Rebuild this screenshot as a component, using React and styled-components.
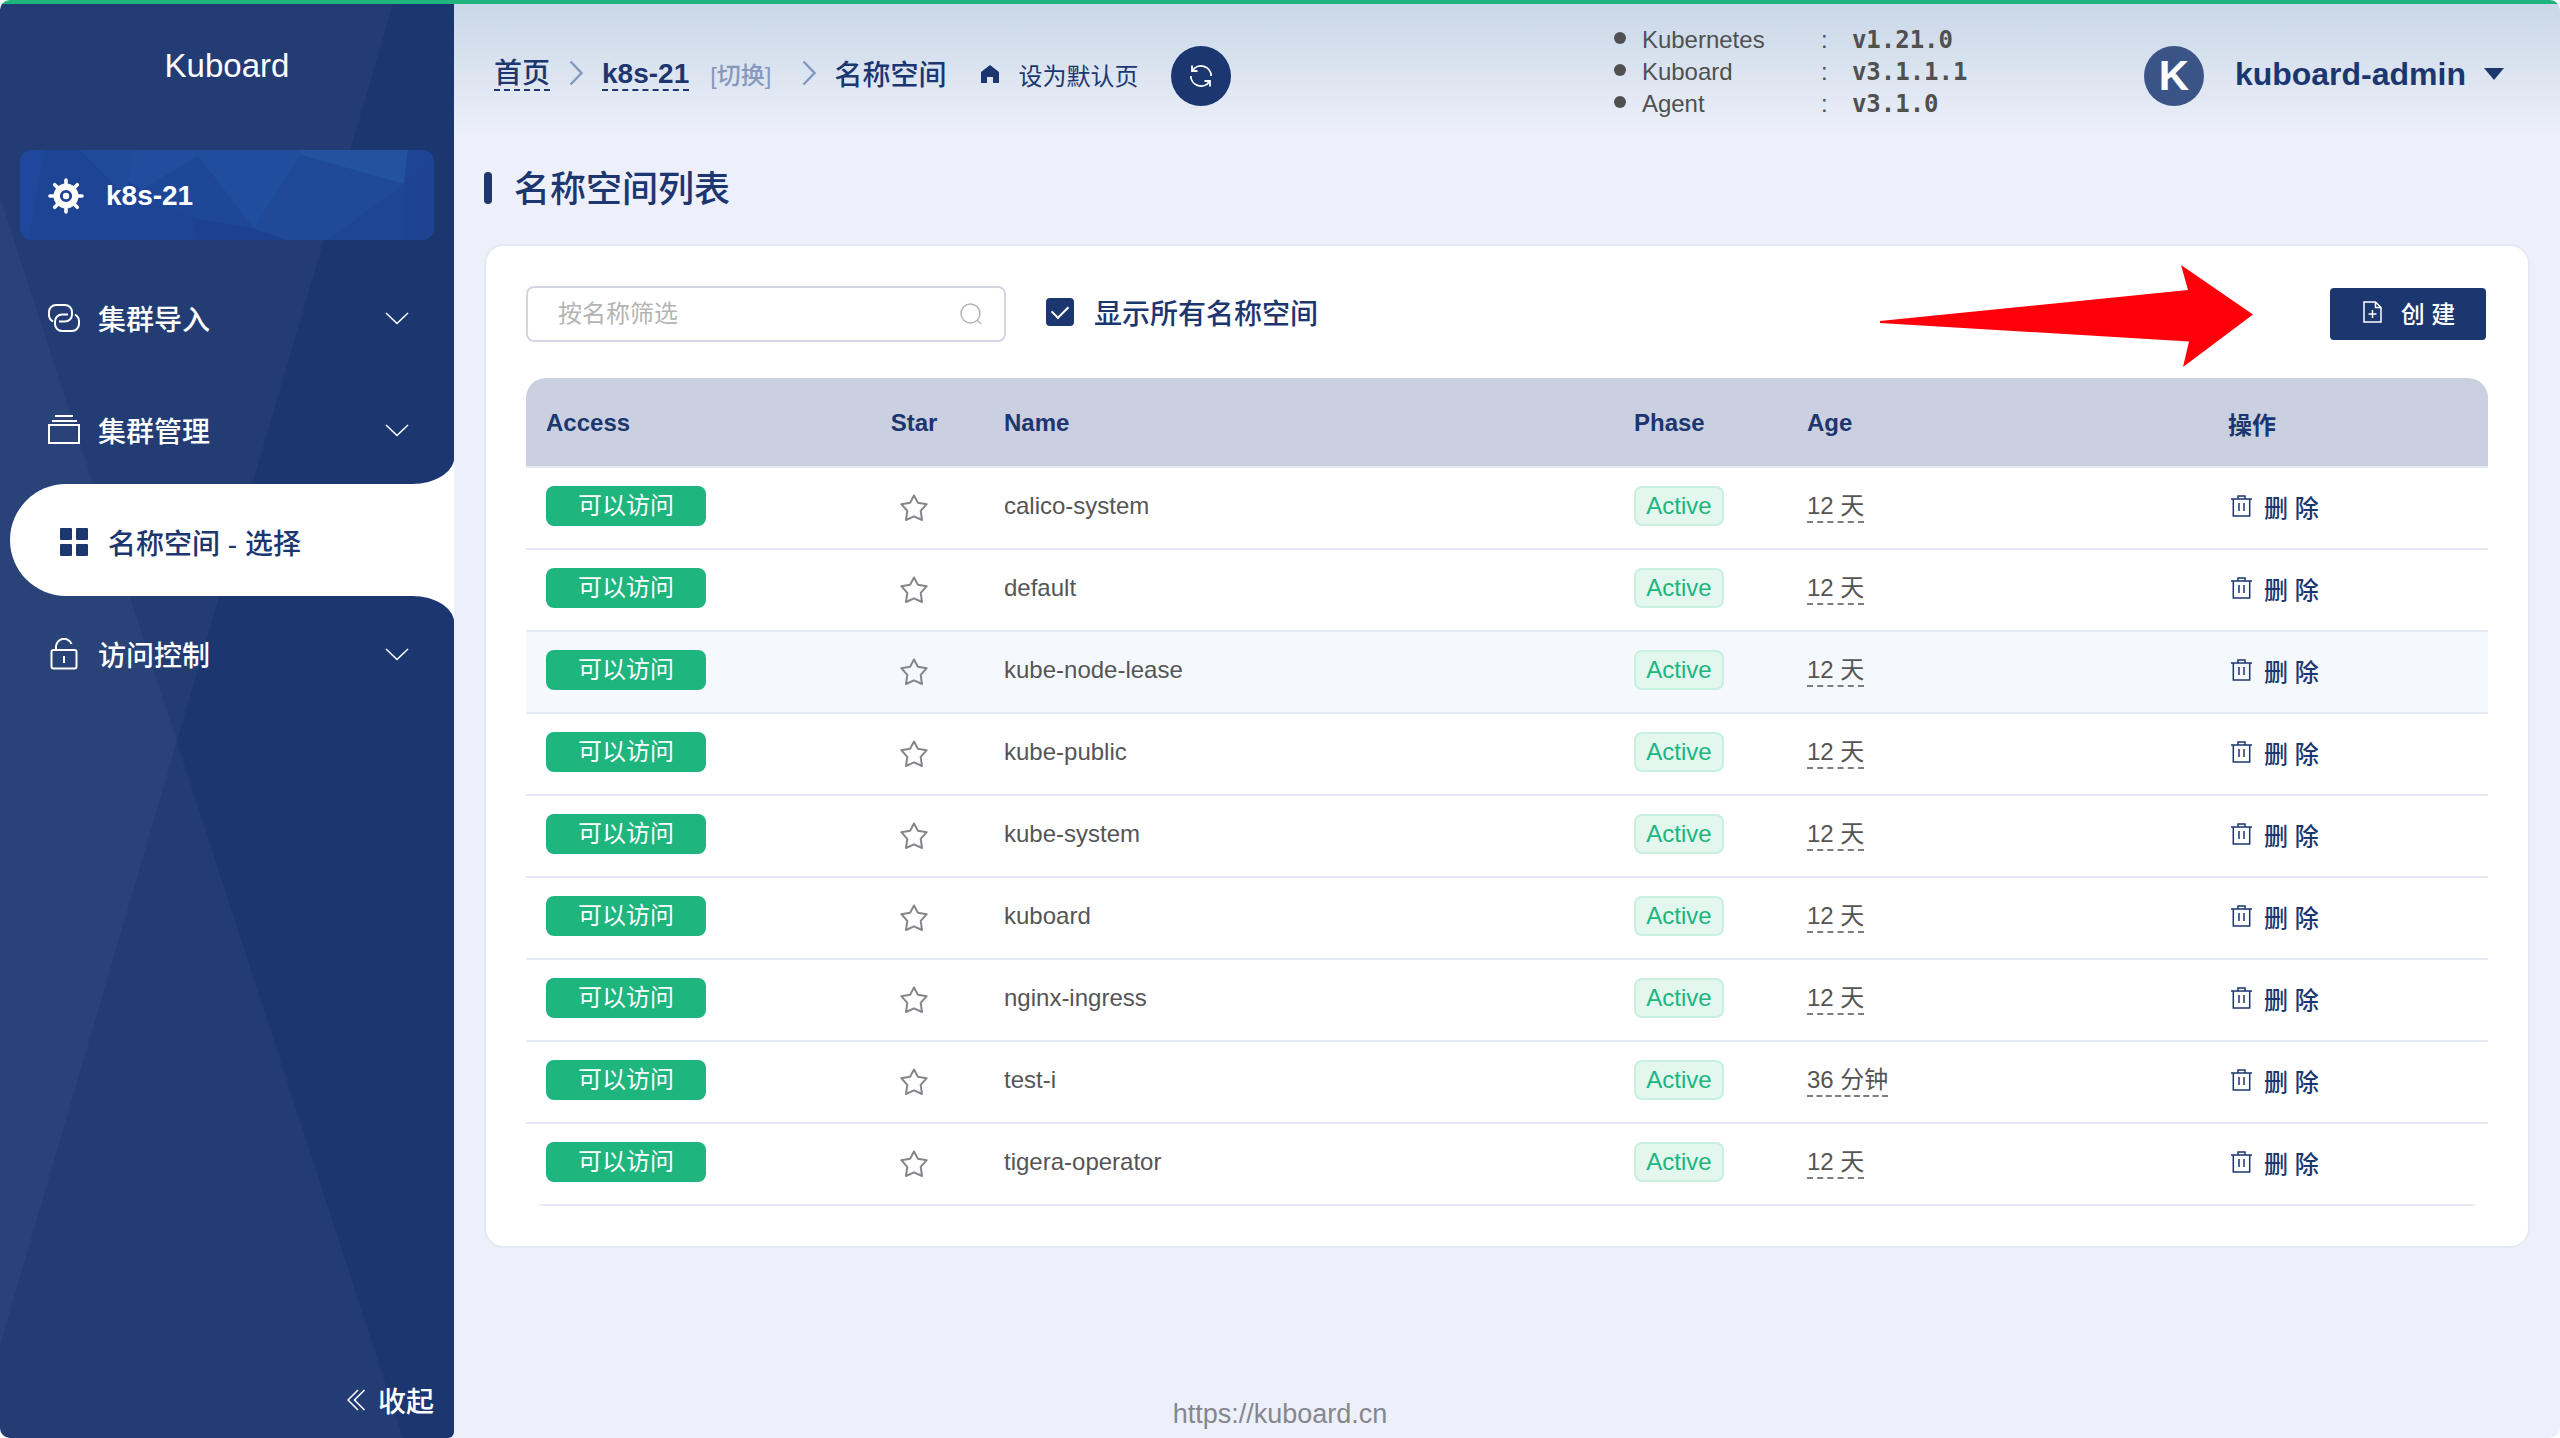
import React, { useState } from 'react';
import styled, { createGlobalStyle, ThemeProvider } from 'styled-components';

const theme = {
    navy: '#1c3670',
    green: '#1eb57e',
    page: '#edf0fa',
    line: '#e4e9f4',
    text: '#555555',
    muted: '#8798bd',
    sans: '"Liberation Sans", "Noto Sans CJK SC", sans-serif',
    mono: '"DejaVu Sans Mono", monospace',
};

const GlobalStyle = createGlobalStyle`
    * {
        box-sizing: border-box;
    }

    body {
        margin: 0;
        background-color: #ffffff;
        font-family: ${({ theme }) => theme.sans};
        font-size: 24px;
        color: ${({ theme }) => theme.text};
    }

    button, input {
        font: inherit;
        color: inherit;
    }

    button {
        border: none;
        padding: 0;
        background: none;
        cursor: pointer;
    }

    a {
        color: inherit;
        text-decoration: none;
    }

    svg {
        display: block;
        flex: none;
    }
`;

const Page = styled.div`
    display: flex;
    flex-direction: column;
    min-height: 100vh;
    border-radius: 10px;
    overflow: hidden;
    background-color: ${({ theme }) => theme.page};
`;

const Progress = styled.div`
    height: 4px;
    background-color: ${({ theme }) => theme.green};
`;

const Layout = styled.div`
    flex: 1;
    display: flex;
`;

// Barra lateral
const Sidebar = styled.aside`
    position: relative;
    z-index: 0;
    flex: none;
    display: flex;
    flex-direction: column;
    width: 454px;
    border-bottom-right-radius: 6px;
    overflow: hidden;
    background-color: ${({ theme }) => theme.navy};
    color: #ffffff;
`;

const SidebarArt = styled.svg`
    position: absolute;
    inset: 0;
    z-index: -1;
    width: 100%;
    height: 100%;
`;

const Brand = styled.div`
    height: 146px;
    padding-bottom: 22px;
    display: flex;
    align-items: center;
    justify-content: center;
    font-size: 33px;
`;

const Cluster = styled.button`
    position: relative;
    z-index: 0;
    display: flex;
    align-items: center;
    gap: 22px;
    height: 90px;
    margin: 0 20px;
    padding: 2px 28px 0;
    border-radius: 12px;
    overflow: hidden;
    background-color: #1e4496;
    font-size: 28px;
    font-weight: 700;
    color: #ffffff;
`;

const Nav = styled.nav`
    display: flex;
    flex-direction: column;
    padding-top: 20px;
`;

const NavItem = styled.a`
    position: relative;
    display: flex;
    align-items: center;
    gap: 18px;
    height: 112px;
    margin-left: ${({ $active }) => ($active ? '10px' : '0')};
    padding: 4px 45px 0 48px;
    border-radius: 56px 0 0 56px;
    background-color: ${({ $active }) => ($active ? '#ffffff' : 'transparent')};
    color: ${({ $active, theme }) => ($active ? theme.navy : '#ffffff')};
    font-size: 28px;
    font-weight: 500;
`;

const NavText = styled.span`
    flex: 1;
`;

const IconBox = styled.span`
    width: 32px;
    display: flex;
    justify-content: center;
`;

// Las esquinas curvas que unen la opcion activa con el borde derecho
const Corner = styled.svg`
    position: absolute;
    right: 0;
    ${({ $below }) => ($below ? 'top: 100%; transform: scaleY(-1);' : 'bottom: 100%;')}
`;

const Collapse = styled.button`
    display: flex;
    align-items: center;
    align-self: flex-end;
    gap: 13px;
    height: 40px;
    margin: auto 20px 18px 0;
    font-size: 28px;
    font-weight: 500;
    color: #ffffff;
`;

// Contenido
const Main = styled.main`
    flex: 1;
    min-width: 0;
    display: flex;
    flex-direction: column;
`;

const Header = styled.header`
    display: flex;
    align-items: center;
    height: 144px;
    padding: 0 56px 0 40px;
    background: linear-gradient(#cad7e8 0, #d2deec 36px, #e0e7f2 84px, ${({ theme }) => theme.page} 132px);
    color: ${({ theme }) => theme.navy};
    white-space: nowrap;
`;

const Breadcrumb = styled.nav`
    display: flex;
    align-items: center;
    gap: 19px;
    padding-bottom: 6px;
    font-size: 28px;
    font-weight: 500;
`;

const Crumb = styled.a`
    height: 36px;
    line-height: 38px;
    border-bottom: 2px dashed ${({ theme }) => theme.navy};
    font-weight: ${({ $bold }) => ($bold ? 700 : 500)};
`;

const SwitchButton = styled.button`
    margin: 0 11px 0 2px;
    font-size: 24px;
    color: ${({ theme }) => theme.muted};
`;

const HomeButton = styled.button`
    display: flex;
    align-items: center;
    gap: 20px;
    margin: 0 32px 0 34px;
    padding-bottom: 4px;
    font-size: 24px;
    color: ${({ theme }) => theme.navy};
`;

const RoundButton = styled.button`
    display: flex;
    align-items: center;
    justify-content: center;
    width: 60px;
    height: 60px;
    border-radius: 50%;
    background-color: ${({ theme }) => theme.navy};
    color: #ffffff;
`;

const Versions = styled.ul`
    margin: 0 176px 8px auto;
    padding: 0;
    list-style: none;
    line-height: 32px;
    color: #505050;
`;

const Version = styled.li`
    display: grid;
    grid-template-columns: 28px 179px 31px 116px;
    height: 32px;

    &::before {
        content: '';
        width: 12px;
        height: 12px;
        margin-top: 8px;
        border-radius: 50%;
        background-color: #505050;
    }

    b {
        font-family: ${({ theme }) => theme.mono};
    }
`;

const UserMenu = styled.button`
    display: flex;
    align-items: center;
    font-size: 32px;
    font-weight: 700;
    color: ${({ theme }) => theme.navy};
`;

const UserName = styled.span`
    padding-bottom: 4px;
`;

const Avatar = styled.span`
    width: 60px;
    height: 60px;
    margin-right: 31px;
    border-radius: 50%;
    background-color: #3a5487;
    color: #ffffff;
    font-size: 42px;
    line-height: 60px;
    text-align: center;
`;

const Caret = styled.span`
    margin: 0 0 4px 18px;
    border: 10px solid transparent;
    border-top: 12px solid ${({ theme }) => theme.navy};
    border-bottom: none;
`;

const Title = styled.h1`
    display: flex;
    align-items: center;
    gap: 22px;
    height: 56px;
    margin: 12px 30px 28px;
    font-size: 36px;
    font-weight: 500;
    color: ${({ theme }) => theme.navy};

    &::before {
        content: '';
        width: 8px;
        height: 32px;
        border-radius: 4px;
        background-color: ${({ theme }) => theme.navy};
    }
`;

const TitleText = styled.span`
    padding-bottom: 4px;
`;

const Card = styled.section`
    margin: 0 30px;
    padding: 40px;
    border: 2px solid ${({ theme }) => theme.line};
    border-radius: 20px;
    background-color: #ffffff;
`;

const Toolbar = styled.div`
    position: relative;
    display: flex;
    align-items: center;
    height: 56px;
    margin-bottom: 36px;
`;

const Search = styled.label`
    display: flex;
    align-items: center;
    width: 480px;
    height: 56px;
    padding: 0 22px 0 30px;
    border: 2px solid #d3d6e1;
    border-radius: 8px;
    color: #b4b5b9;

    input {
        flex: 1;
        min-width: 0;
        border: none;
        padding: 0;
        outline: none;
        background: none;
        color: ${({ theme }) => theme.text};
    }

    input::placeholder {
        color: #b4b4b4;
    }
`;

const CheckLabel = styled.label`
    display: flex;
    align-items: center;
    gap: 20px;
    margin: 0 auto 4px 40px;
    font-size: 28px;
    font-weight: 500;
    color: ${({ theme }) => theme.navy};
`;

const CheckBox = styled.input`
    appearance: none;
    width: 28px;
    height: 28px;
    margin: 0;
    border: 2px solid ${({ theme }) => theme.navy};
    border-radius: 4px;
    display: grid;
    place-items: center;

    &:checked {
        background-color: ${({ theme }) => theme.navy};
    }

    &:checked::before {
        content: '';
        width: 8px;
        height: 14px;
        margin-bottom: 4px;
        border: solid #ffffff;
        border-width: 0 2px 2px 0;
        transform: rotate(45deg);
    }
`;

const Arrow = styled.svg`
    position: absolute;
    right: 235px;
    top: -21px;
`;

const CreateButton = styled.button`
    display: flex;
    align-items: center;
    justify-content: center;
    gap: 19px;
    width: 156px;
    height: 52px;
    margin-right: 2px;
    padding: 0 0 4px 2px;
    border-radius: 4px;
    background-color: ${({ theme }) => theme.navy};
    color: #ffffff;
    font-weight: 500;
`;

const TableWrap = styled.div`
    border-radius: 20px;
    overflow: hidden;
`;

const Table = styled.table`
    width: 100%;
    table-layout: fixed;
    border-collapse: separate;
    border-spacing: 0;
`;

const Th = styled.th`
    width: ${({ $width }) => $width || 'auto'};
    height: 90px;
    padding: 2px 20px 0;
    border-bottom: 2px solid ${({ theme }) => theme.line};
    background-color: #cad0e0;
    color: ${({ theme }) => theme.navy};
    text-align: ${({ $center }) => ($center ? 'center' : 'left')};
`;

const Td = styled.td`
    height: 82px;
    padding: 0 20px 4px;
    border-bottom: 2px solid ${({ theme }) => theme.line};
    text-align: ${({ $center }) => ($center ? 'center' : 'left')};
`;

const Row = styled.tr`
    background-color: ${({ $hover }) => ($hover ? '#f5f8fc' : '#ffffff')};
`;

const AccessTag = styled.span`
    display: block;
    width: 160px;
    height: 40px;
    border-radius: 8px;
    background-color: ${({ theme }) => theme.green};
    color: #ffffff;
    line-height: 40px;
    text-align: center;
`;

const PhaseTag = styled.span`
    display: block;
    width: 90px;
    height: 40px;
    border: 2px solid #c6f0e0;
    border-radius: 8px;
    background-color: #e3f7ef;
    color: ${({ theme }) => theme.green};
    line-height: 36px;
    text-align: center;
`;

const StarButton = styled.button`
    display: block;
    margin: 4px auto 0;
    color: #85868c;
`;

const Age = styled.span`
    display: inline-block;
    height: 34px;
    line-height: 34px;
    vertical-align: middle;
    border-bottom: 2px dashed #7d7d7d;
`;

const DeleteButton = styled.button`
    display: flex;
    align-items: center;
    gap: 12px;
    margin-left: 3px;
    font-weight: 500;
    color: ${({ theme }) => theme.navy};
`;

const Footer = styled.footer`
    margin-top: auto;
    padding: 0 454px 6px 0;
    font-size: 27px;
    line-height: 36px;
    text-align: center;
    color: #85878e;
`;

const WheelIcon = () => (
    <svg width="36" height="36" viewBox="0 0 36 36" fill="none" stroke="#fff">
        <circle cx="18" cy="18" r="9.300" strokeWidth="6.400" />
        <circle cx="18" cy="18" r="3.200" fill="#fff" stroke="none" />
        <g strokeWidth="3.6" strokeLinecap="round">
            <path d="M18 2V7M18 29v5M2 18H7M29 18h5M6.700 6.700l4 4M25.300 25.300l4 4M29.300 6.700l-4 4M6.700 29.300l4-4" />
        </g>
    </svg>
);

const LinkIcon = () => (
    <svg width="32" height="28" viewBox="0 0 32 28" fill="none" stroke="currentColor" strokeWidth="2">
        <path d="M5 17.500C2.500 16 1 14 1 11V8a7 7 0 0 1 7-7h9a7 7 0 0 1 7 7v2.500a7 7 0 0 1-7 7h-6" />
        <path d="M20 10.500h-6a7 7 0 0 0-7 7V20a7 7 0 0 0 7 7h10a7 7 0 0 0 7-7v-3c0-3-1.500-5-4-6.500" />
    </svg>
);

const BoxIcon = () => (
    <svg width="32" height="30" viewBox="0 0 32 30" fill="none" stroke="currentColor" strokeWidth="2">
        <path d="M7 1h18M4 6h25M1 10h30v18H1z" />
    </svg>
);

const GridIcon = () => (
    <svg width="28" height="28" viewBox="0 0 28 28" fill="currentColor">
        <rect width="12" height="12" rx="1" />
        <rect x="16" width="12" height="12" rx="1" />
        <rect y="16" width="12" height="12" rx="1" />
        <rect x="16" y="16" width="12" height="12" rx="1" />
    </svg>
);

const LockIcon = () => (
    <svg width="32" height="32" viewBox="0 0 32 32" fill="none" stroke="currentColor" strokeWidth="2">
        <rect x="3.500" y="12" width="25" height="18.500" rx="2" />
        <path d="M8 12V9a8 8 0 0 1 15.500-3M16 18v7" />
    </svg>
);

const ChevronDown = () => (
    <svg width="24" height="13" viewBox="0 0 24 13" fill="none" stroke="currentColor" strokeWidth="1.600">
        <path d="M1 1l11 10.500L23 1" />
    </svg>
);

const ChevronRight = () => (
    <svg width="14" height="26" viewBox="0 0 14 26" fill="none" stroke="#8298be" strokeWidth="2.400">
        <path d="M1.500 1.500L12.500 13 1.500 24.500" />
    </svg>
);

const DoubleLeft = () => (
    <svg width="18" height="22" viewBox="0 0 18 22" fill="none" stroke="currentColor" strokeWidth="1.500">
        <path d="M11 1L1 11l10 10M17.500 1l-10 10 10 10" />
    </svg>
);

const HomeIcon = () => (
    <svg width="18" height="18" viewBox="0 0 18 18" fill="currentColor">
        <path d="M9 0l9 7v11h-6v-6H6v6H0V7z" />
    </svg>
);

const RefreshIcon = () => (
    <svg width="24" height="24" viewBox="0 0 24 24" fill="none" stroke="currentColor" strokeWidth="1.800">
        <path d="M3.500 6.500A10.200 10.200 0 0 1 22.200 12M3 1.500v5.500h5.500" />
        <path d="M20.500 17.500A10.200 10.200 0 0 1 1.800 12M21 22.500V17h-5.500" />
    </svg>
);

const SearchIcon = () => (
    <svg width="22" height="22" viewBox="0 0 22 22" fill="none" stroke="currentColor" strokeWidth="1.500">
        <circle cx="10.500" cy="10.500" r="9.500" />
        <path d="M17 17l4 4" />
    </svg>
);

const FileIcon = () => (
    <svg width="19" height="22" viewBox="0 0 19 22" fill="none" stroke="currentColor" strokeWidth="1.500">
        <path d="M1 1h11.500L18 6.500V21H1zM12.500 1v5.500H18M9.500 9v8M5.500 13h8" />
    </svg>
);

const TrashIcon = () => (
    <svg width="21" height="22" viewBox="0 0 21 22" fill="none" stroke="currentColor" strokeWidth="1.500">
        <path d="M0 4h21M7 4V1h7v3M2.300 4v17h16.400V4M8 8v8M13 8v8" />
    </svg>
);

const StarIcon = () => (
    <svg width="28" height="28" viewBox="0 0 28 28" fill="none" stroke="currentColor" strokeWidth="2" strokeLinejoin="round">
        <path d="M14 1.500l3.900 7.300 8.800 1.400-6 6.600 1.300 9.200-8-3.700-8 3.700 1.300-9.200-6-6.600 8.800-1.400z" />
    </svg>
);

const ClusterArt = () => (
    <SidebarArt viewBox="0 0 414 90" preserveAspectRatio="none">
        <polygon points="0,0 25,0 8,90 0,90" fill="#1f479b" />
        <polygon points="60,0 178,0 178,6 122,40" fill="#224d9e" />
        <polygon points="113,0 60,0 106,46" fill="#204b9b" />
        <polygon points="178,6 122,40 172,68 234,79" fill="#1f4798" />
        <polygon points="178,0 280,0 280,5 234,79 178,6" fill="#214d9e" />
        <polygon points="280,0 388,0 384,34 280,5" fill="#23539f" />
        <polygon points="280,5 384,34 308,90 266,90 234,79" fill="#204a98" />
        <polygon points="384,34 388,0 414,0 414,8" fill="#1e4495" />
        <polygon points="414,8 384,34 384,90 414,90" fill="#1e4393" />
        <polygon points="384,34 384,90 308,90" fill="#1e4594" />
        <polygon points="172,68 234,79 266,90 178,90" fill="#1d4190" />
    </SidebarArt>
);

const menu = [
    { text: '集群导入', icon: LinkIcon },
    { text: '集群管理', icon: BoxIcon },
    { text: '名称空间 - 选择', icon: GridIcon, active: true },
    { text: '访问控制', icon: LockIcon },
];

const versions = [
    { name: 'Kubernetes', value: 'v1.21.0' },
    { name: 'Kuboard', value: 'v3.1.1.1' },
    { name: 'Agent', value: 'v3.1.0' },
];

const namespaces = [
    { name: 'calico-system', age: '12 天' },
    { name: 'default', age: '12 天' },
    { name: 'kube-node-lease', age: '12 天', hover: true },
    { name: 'kube-public', age: '12 天' },
    { name: 'kube-system', age: '12 天' },
    { name: 'kuboard', age: '12 天' },
    { name: 'nginx-ingress', age: '12 天' },
    { name: 'test-i', age: '36 分钟' },
    { name: 'tigera-operator', age: '12 天' },
];

function Menu() {
    return (
        <Sidebar>
            <SidebarArt viewBox="0 0 454 1434" preserveAspectRatio="none" fill="#fff" fillOpacity="0.03">
                <polygon points="0,0 393,0 0,1341" />
                <polygon points="0,193 403,1434 0,1434" />
            </SidebarArt>
            <Brand>Kuboard</Brand>
            <Cluster>
                <ClusterArt />
                <WheelIcon />
                k8s-21
            </Cluster>
            <Nav>
                {menu.map(({ text, icon: Icon, active }) => (
                    <NavItem key={text} href="#" $active={active}>
                        <IconBox><Icon /></IconBox>
                        <NavText>{text}</NavText>
                        {active ?
                            <>
                                <Corner width="42" height="24" viewBox="0 0 42 24" fill="#fff">
                                    <path d="M42 0v24H0C24 24 40 12 42 0z" />
                                </Corner>
                                <Corner $below width="42" height="24" viewBox="0 0 42 24" fill="#fff">
                                    <path d="M42 0v24H0C24 24 40 12 42 0z" />
                                </Corner>
                            </>
                            :
                            <ChevronDown />}
                    </NavItem>
                ))}
            </Nav>
            <Collapse>
                <DoubleLeft />
                收起
            </Collapse>
        </Sidebar>
    );
}

function Topbar() {
    return (
        <Header>
            <Breadcrumb>
                <Crumb href="#">首页</Crumb>
                <ChevronRight />
                <Crumb href="#" $bold>k8s-21</Crumb>
                <SwitchButton>[切换]</SwitchButton>
                <ChevronRight />
                <span>名称空间</span>
            </Breadcrumb>
            <HomeButton>
                <HomeIcon />
                设为默认页
            </HomeButton>
            <RoundButton aria-label="刷新"><RefreshIcon /></RoundButton>
            <Versions>
                {versions.map(({ name, value }) => (
                    <Version key={name}>
                        <span>{name}</span>
                        <span>:</span>
                        <b>{value}</b>
                    </Version>
                ))}
            </Versions>
            <UserMenu>
                <Avatar>K</Avatar>
                <UserName>kuboard-admin</UserName>
                <Caret />
            </UserMenu>
        </Header>
    );
}

function App() {
    const [filter, setFilter] = useState('');
    const [showAll, setShowAll] = useState(true);

    const rows = namespaces.filter(({ name }) => name.includes(filter));

    return (
        <ThemeProvider theme={theme}>
            <GlobalStyle />
            <Page>
                <Progress />
                <Layout>
                    <Menu />
                    <Main>
                        <Topbar />
                        <Title><TitleText>名称空间列表</TitleText></Title>
                        <Card>
                            <Toolbar>
                                <Search>
                                    <input
                                        aria-label="按名称筛选"
                                        placeholder="按名称筛选"
                                        value={filter}
                                        onChange={(e) => setFilter(e.target.value)}
                                    />
                                    <SearchIcon />
                                </Search>
                                <CheckLabel>
                                    <CheckBox type="checkbox" checked={showAll} onChange={(e) => setShowAll(e.target.checked)} />
                                    显示所有名称空间
                                </CheckLabel>
                                <CreateButton>
                                    <FileIcon />
                                    创 建
                                </CreateButton>
                                <Arrow width="373" height="102" viewBox="0 0 373 102" fill="#fd0009">
                                    <path d="M0 56L308 25 301 0l72 49.500L303 102l6-25.500L0 58z" />
                                </Arrow>
                            </Toolbar>
                            <TableWrap>
                                <Table>
                                    <thead>
                                        <tr>
                                            <Th $width="318px">Access</Th>
                                            <Th $width="140px" $center>Star</Th>
                                            <Th>Name</Th>
                                            <Th $width="173px">Phase</Th>
                                            <Th $width="421px">Age</Th>
                                            <Th $width="280px">操作</Th>
                                        </tr>
                                    </thead>
                                    <tbody>
                                        {rows.map(({ name, age, hover }) => (
                                            <Row key={name} $hover={hover}>
                                                <Td><AccessTag>可以访问</AccessTag></Td>
                                                <Td $center>
                                                    <StarButton aria-label={name}><StarIcon /></StarButton>
                                                </Td>
                                                <Td>{name}</Td>
                                                <Td><PhaseTag>Active</PhaseTag></Td>
                                                <Td><Age>{age}</Age></Td>
                                                <Td>
                                                    <DeleteButton>
                                                        <TrashIcon />
                                                        删 除
                                                    </DeleteButton>
                                                </Td>
                                            </Row>
                                        ))}
                                    </tbody>
                                </Table>
                            </TableWrap>
                        </Card>
                        <Footer><a href="https://kuboard.cn">https://kuboard.cn</a></Footer>
                    </Main>
                </Layout>
            </Page>
        </ThemeProvider>
    );
}

export default App;
